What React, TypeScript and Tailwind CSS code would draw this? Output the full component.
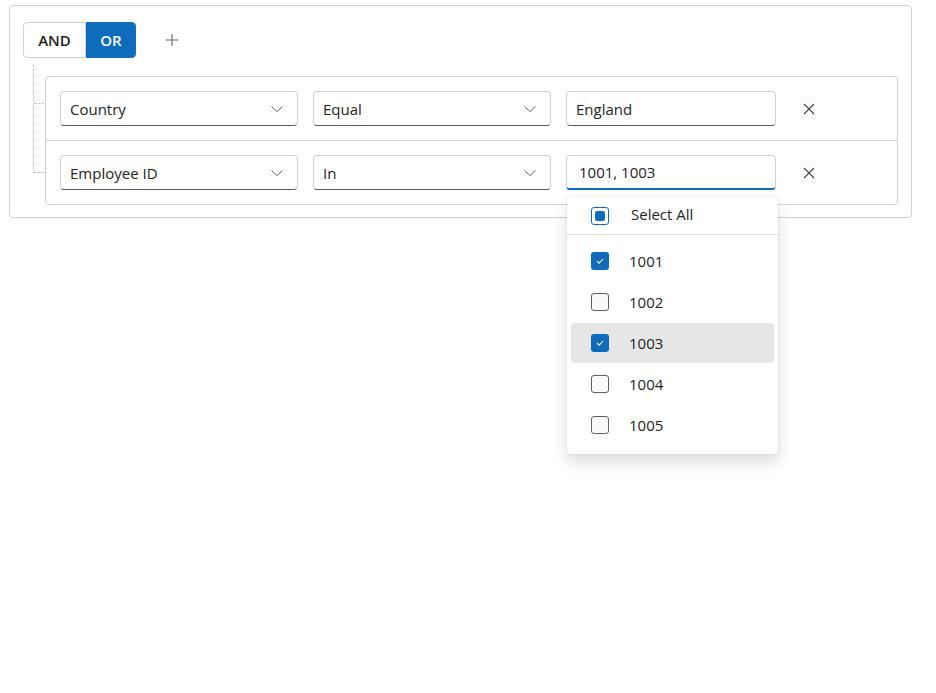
import { useState } from 'react';

const font = { fontFamily: '"Segoe UI", "Open Sans", "Noto Sans", sans-serif' };

function Chevron() {
	return (
		<svg width="14" height="12" viewBox="0 0 14 12" className="text-[#616161]">
			<path d="M1.5 3.5 L7 8.5 L12.5 3.5" fill="none" stroke="currentColor" strokeWidth="1" />
		</svg>
	);
}

function Cross() {
	return (
		<svg width="12" height="12" viewBox="0 0 12 12" className="text-[#424242]">
			<path d="M1 1 L11 11 M11 1 L1 11" fill="none" stroke="currentColor" strokeWidth="1.1" />
		</svg>
	);
}

function Check() {
	return (
		<svg width="10" height="10" viewBox="0 0 10 10">
			<path d="M2 5.2 L4.1 7.2 L8 3" fill="none" stroke="white" strokeWidth="1.1" />
		</svg>
	);
}

function Dropdown({ label }: { label: string }) {
	return (
		<div className="flex h-[35px] w-[238px] items-center justify-between rounded border border-[#d1d1d1] border-b-[#616161] bg-white pl-[9px] pr-[13px] pt-[1px] text-[15px] text-[#242424]">
			<span>{label}</span>
			<Chevron />
		</div>
	);
}

const options = [
	{ id: '1001', checked: true },
	{ id: '1002', checked: false },
	{ id: '1003', checked: true, hover: true },
	{ id: '1004', checked: false },
	{ id: '1005', checked: false },
];

function Popup() {
	return (
		<div className="absolute left-[1px] top-[42px] z-10 w-[211px] rounded bg-white pb-[9px] shadow-[0_8px_16px_rgba(0,0,0,0.14),0_0_2px_rgba(0,0,0,0.12)]">
			<div className="flex h-[38px] items-center border-b border-[#e0e0e0] pl-[24px]">
				<span className="flex h-[18px] w-[18px] items-center justify-center rounded-[3px] border border-[#0f6cbd]">
					<span className="h-[10px] w-[10px] rounded-[2px] bg-[#0f6cbd]" />
				</span>
				<span className="ml-[22px] pb-[3px] text-[15px] text-[#242424]">Select All</span>
			</div>
			<div className="flex flex-col gap-[1px] px-[4px] pt-[6px]">
				{options.map((o) => (
					<div
						key={o.id}
						className={`flex h-[40px] items-center rounded pl-[20px] ${o.hover ? 'bg-[#e6e6e6]' : ''}`}
					>
						{o.checked ? (
							<span className="flex h-[18px] w-[18px] items-center justify-center rounded-[3px] bg-[#0f6cbd]">
								<Check />
							</span>
						) : (
							<span className="h-[18px] w-[18px] rounded-[3px] border border-[#616161] bg-[#fafafa]" />
						)}
						<span className="ml-[20px] text-[15px] text-[#242424]">{o.id}</span>
					</div>
				))}
			</div>
		</div>
	);
}

function Rule({ field, op, value, open }: { field: string; op: string; value: string; open?: boolean }) {
	return (
		<div className="flex h-[63px] items-center pl-[14px]">
			<Dropdown label={field} />
			<div className="ml-[15px]">
				<Dropdown label={op} />
			</div>
			<div className="relative ml-[15px]">
				<div
					className={`flex h-[35px] w-[210px] items-center rounded border border-[#d1d1d1] bg-white pl-[9px] pt-[1px] text-[15px] text-[#242424] ${
						open ? 'border-b-2 border-b-[#0f6cbd] pl-[12px]' : 'border-b-[#616161]'
					}`}
				>
					{value}
				</div>
				{open && <Popup />}
			</div>
			<button className="ml-[21px] flex h-[24px] w-[24px] items-center justify-center">
				<Cross />
			</button>
		</div>
	);
}

export default function App() {
	const [cond, setCond] = useState<'AND' | 'OR'>('OR');

	return (
		<div className="min-h-[693px] bg-white pl-[9px] pt-[5px]" style={font}>
			<div className="w-[903px] rounded border border-[#d1d1d1] pb-[12px] pl-[13px] pr-[13px] pt-[16px]">
				<div className="flex items-center">
					<div className="flex h-[36px] overflow-hidden rounded">
						<button
							onClick={() => setCond('AND')}
							className={`w-[63px] rounded-l border text-[15px] font-semibold ${
								cond === 'AND' ? 'border-[#0f6cbd] bg-[#0f6cbd] text-white' : 'border-[#d1d1d1] bg-white text-[#242424]'
							}`}
						>
							AND
						</button>
						<button
							onClick={() => setCond('OR')}
							className={`w-[50px] rounded-r border text-[15px] font-semibold ${
								cond === 'OR' ? 'border-[#0f6cbd] bg-[#0f6cbd] text-white' : 'border-[#d1d1d1] bg-white text-[#242424]'
							}`}
						>
							OR
						</button>
					</div>
					<button className="ml-[24px] flex h-[24px] w-[24px] items-center justify-center text-[#616161]">
						<svg width="14" height="14" viewBox="0 0 14 14">
							<path d="M7 1 V13 M1 7 H13" fill="none" stroke="currentColor" strokeWidth="1.1" />
						</svg>
					</button>
				</div>

				<div className="relative mt-[18px] pl-[22px]">
					<div className="absolute left-[10px] top-[-11px] h-[108px] border-l border-dotted border-[#b8b8b8]" />
					<div className="absolute left-[11px] top-[27px] w-[10px] border-t border-dotted border-[#b8b8b8]" />
					<div className="absolute left-[11px] top-[96px] w-[10px] border-t border-dotted border-[#b8b8b8]" />
					<div className="rounded border border-[#d1d1d1]">
						<Rule field="Country" op="Equal" value="England" />
						<div className="border-t border-[#d1d1d1]" />
						<Rule field="Employee ID" op="In" value="1001, 1003" open />
					</div>
				</div>
			</div>
		</div>
	);
}
